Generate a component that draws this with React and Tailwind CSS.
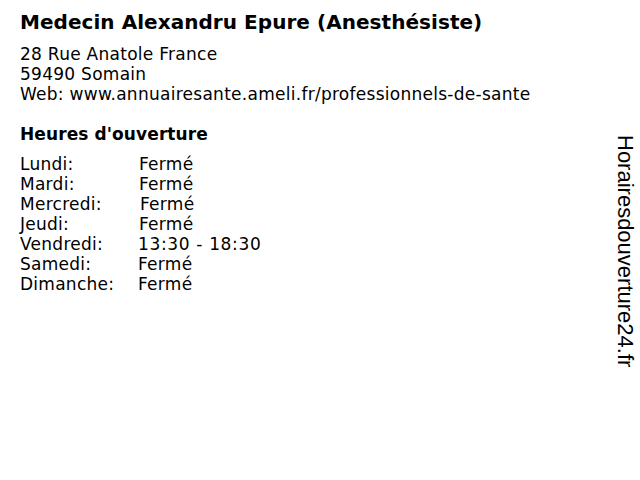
const hours = [
  { day: 'Lundi:', time: 'Fermé', w: 'w-[119px]' },
  { day: 'Mardi:', time: 'Fermé', w: 'w-[119px]' },
  { day: 'Mercredi:', time: 'Fermé', w: 'w-[120px]' },
  { day: 'Jeudi:', time: 'Fermé', w: 'w-[119px]' },
  { day: 'Vendredi:', time: '13:30 - 18:30', w: 'w-[118px]', wide: true },
  { day: 'Samedi:', time: 'Fermé', w: 'w-[118px]' },
  { day: 'Dimanche:', time: 'Fermé', w: 'w-[118px]' },
];

export default function App() {
  return (
    <div className="flex w-[640px] h-[480px] bg-white text-black font-['DejaVu_Sans',sans-serif]">
      <div className="flex-1 pl-5 pt-[10px]">
        <h1 className="text-[20px] font-bold leading-6 tracking-[0.05px]">Medecin Alexandru Epure (Anesthésiste)</h1>

        {/* address */}
        <div className="mt-[10px] text-[17px] leading-5 tracking-[0.27px]">
          <div>28 Rue Anatole France</div>
          <div>59490 Somain</div>
          <div>Web: www.annuairesante.ameli.fr/professionnels-de-sante</div>
        </div>

        <h2 className="mt-5 text-[17px] font-bold leading-5 tracking-[0.1px]">Heures d'ouverture</h2>

        <div className="mt-[10px] text-[17px] leading-5 tracking-[0.27px]">
          {hours.map((h) => (
            <div key={h.day} className="flex">
              <span className={h.w}>{h.day}</span>
              <span className={h.wide ? 'tracking-[0.65px]' : ''}>{h.time}</span>
            </div>
          ))}
        </div>
      </div>

      <div className="pt-[135px] pr-[4px]">
        <span className="[writing-mode:vertical-rl] text-[22px] leading-[22px] font-['Liberation_Sans',sans-serif]">
          Horairesdouverture24.fr
        </span>
      </div>
    </div>
  );
}
